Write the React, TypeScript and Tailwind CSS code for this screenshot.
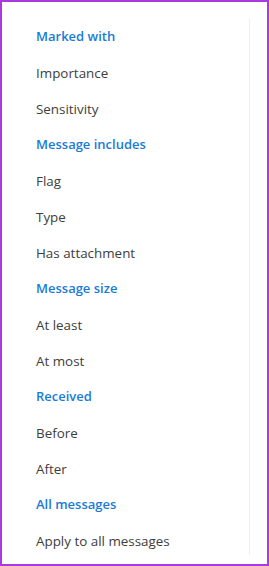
import React from "react";

type Row = { label: string; heading?: boolean };

const rows: Row[] = [
  { label: "Marked with", heading: true },
  { label: "Importance" },
  { label: "Sensitivity" },
  { label: "Message includes", heading: true },
  { label: "Flag" },
  { label: "Type" },
  { label: "Has attachment" },
  { label: "Message size", heading: true },
  { label: "At least" },
  { label: "At most" },
  { label: "Received", heading: true },
  { label: "Before" },
  { label: "After" },
  { label: "All messages", heading: true },
  { label: "Apply to all messages" },
];

export default function App() {
  return (
    <div
      className="w-[269px] h-[566px] border-2 border-[#a93ae0] bg-white overflow-hidden"
      style={{ fontFamily: '"Open Sans", "Noto Sans", sans-serif' }}
    >
      <div className="flex h-full">
        <div className="w-[248px] mt-[17px] mb-[9px] border-r border-[#eeeeee]">
          {rows.map((row) => (
            <div key={row.label} className="h-9 flex items-center pl-[34px]">
              {row.heading ? (
                <span className="text-[13px] font-semibold text-[#1a7bd6]">
                  {row.label}
                </span>
              ) : (
                <span className="text-[13.4px] text-[#3d3d3d]">{row.label}</span>
              )}
            </div>
          ))}
        </div>
      </div>
    </div>
  );
}
